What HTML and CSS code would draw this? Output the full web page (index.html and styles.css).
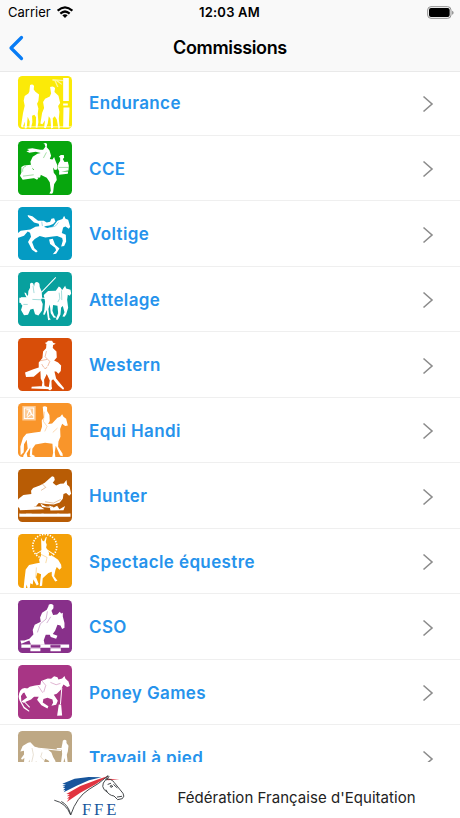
FILE: index.html
```html
<!DOCTYPE html>
<html lang="fr">
<head>
<meta charset="utf-8">
<title>Commissions</title>
<link rel="stylesheet" href="styles.css">
</head>
<body>
<div class="app">
<header class="header">
  <div class="status">
    <div class="carrier"><span>Carrier</span>
      <svg class="wifi" viewBox="0 0 48 36"><g fill="none" stroke="#000" stroke-width="6.5"><path d="M2 14Q24-6 46 14"/><path d="M10 23Q24 10 38 23"/></g><path d="M16 28Q24 22 32 28L24 36Z"/></svg>
    </div>
    <span class="time">12:03 AM</span>
    <svg class="battery" viewBox="0 0 81 39"><rect x="2" y="2" width="70" height="35" rx="10" fill="none" stroke="#929292" stroke-width="3"/><rect x="6" y="6" width="62" height="27" rx="6"/><path d="M75 14q5 2 5 6t-5 6z" fill="#999"/></svg>
  </div>
  <div class="nav">
    <svg class="back" viewBox="0 0 16 26"><path d="M13.5 2.5L3 13L13.5 23.5" fill="none" stroke="#087cf5" stroke-width="3.2" stroke-linecap="round" stroke-linejoin="round"/></svg>
    <h1 class="title">Commissions</h1>
  </div>
</header>
<main class="list">
  <div class="row"><svg class="icon yellow" viewBox="24 16 160 160">
    <path d="M60 43q8-4 12 3l-1 10 5 7 11 8-2 20-4 8 4 14-2 16 2 25-3 17-5-1 1-31-5-7-7 3 1 19-4 17-5-1 1-18-6-14-3 34-6 1 1-21-7 17-5-2 6-40 5-22-3-15 3-14 11-8 3-6zM120 49q9-5 15 3l-2 12 12 11 5 22-6 9 4 17-2 21 3 28-4 2-5-28-6-10-6 6 1 29-6 2-2-29-5-8-3 22-6 14-5-1 3-23-8 12-6-2 5-31 6-15-3-18 6-10 14-7 4-9z"/>
    <path d="M159 22h17v69h-17zM159 98h14v6h-14zM160 110h18l-2 60h-17zM35 167h148v2h-148z"/><path d="M127 25l32 3-1 4-14-2 12 10-2 2-17-12 8 19-4 0-8-18-6-1z" opacity=".6"/>
  </svg><span class="label">Endurance</span><svg class="chevron" viewBox="0 0 12 18"><path d="M1.5 1.5L10 9L1.5 16.5"/></svg></div>
  <div class="row"><svg class="icon green" viewBox="24 16 160 160">
    <path d="M99 24q7-5 12 1l-1 10 8 9 5 16-4 10 8 1 5-7 4 11 6 14-1 12-7 2-5-8 2 16 7 9 2 13-8 12-3 24-3 5-8-1 4-8-3-26-9-13-17-8-15-11-7 2-3 10 17 8-4 5-18-10 0-13 9-7-8-8-3-16 7-15 14-9 10-2-15-4-19 3-9-4 9-3-7-4 16-2 23 4 9 0 7-9-3-9z"/>
    <path d="M34 94l8-5 21-2 6 15 13 3 11 10-3 10-15 2-37 5-8-12 4-9zM145 83l5-7v-10l-4-3 6-5 9 0 1 8-4 4 5 9 10-1 3 12-1 14-27 4-6-11zM147 107h27l-1 7-26 3z"/>
    <path class="mark" d="M38 108q-2-14 10-17M39 121l32-4M109 50l-9 17M146 95h29"/>
  </svg><span class="label">CCE</span><svg class="chevron" viewBox="0 0 12 18"><path d="M1.5 1.5L10 9L1.5 16.5"/></svg></div>
  <div class="row"><svg class="icon blue" viewBox="24 16 160 160">
    <path d="M53 40l14 4 17 13 17 0 9 5 10-2 4-9 8-1 4 9-7 8-11 4-11 2-10 5-9-3-2-9-14-4-18-17zM61 83l15-8 17-2 19 6 17-5 13-17 15-5 5-10 4 9 8 3 6 21-4 6-10-7-7 3-4 17 12 5 1 20-6 14-9 1 5-17-2-8-15-6-13 1-22 3-17-4-15 9-8 9 7 18 10 9-5 4-12-8-12-23 9-16-3-12-7-4-11 13-17 6-14-3 13-3-16-2 14-5 10-8z"/>
    <path d="M128 111l7 18 13 11-10 16-10 1 10-12-3-7-15-11-3-14z"/><path class="mark" d="M95 60l2 13M121 77l15-4 9-11M78 115l18 2"/>
  </svg><span class="label">Voltige</span><svg class="chevron" viewBox="0 0 12 18"><path d="M1.5 1.5L10 9L1.5 16.5"/></svg></div>
  <div class="row"><svg class="icon teal" viewBox="24 16 160 160">
    <path d="M60 51q5-6 10 0l2 8 2-10q8-7 14 2l1 10 6 14 1 17-3 8 5 12-2 19-11 15-10-4-5-16-9 2-7 16-12 1-9-15 4-13-4-8-5-1v-15h22l-5-10-2-6 5 2 3 7h3l1-13 5-10z"/>
    <path d="M101 85l13-12 23-1 9-13 5 3 5 8 9-13 3 8 13 4 2 11-4 7-6-3-2 15 3 24-6 20-5 7-6-1 6-13-5-18-5 4-2 21-8 16-6-1 7-19-2-22-13-2-2 17 5 13 7 7-8 1-9-14-3-26-4 14 3 26 4 5-8 2-3-21-1-9-6 14-5-1 4-14 2-25z"/>
    <path class="line" d="M33 93h38M94 77l43-45M93 94l20 2M34 93v20"/><path class="mark" d="M69 58l3 21M40 113h13M67 98l26 1M147 78l2 17-6 11M154 71l1 29"/>
  </svg><span class="label">Attelage</span><svg class="chevron" viewBox="0 0 12 18"><path d="M1.5 1.5L10 9L1.5 16.5"/></svg></div>
  <div class="row"><svg class="icon rust" viewBox="24 16 160 160">
    <path d="M104 31l6-2 4-5 12 0 3 6 8 3-8 4-1 9 11 10 1 18-8 9 12 6 9 9-1 17-7 8-7-7-5 0 5 21 24 29-3 5-15-13-15-19-5 5 1 23-5 6-5-3 4-27-9-19-8 17 1 17 6 6-7 3-7-5 2-14-5-11-1-22-20 17-23 1-3-14 27-10 14-5 0-15 11-13 2-20 9-9 1-13z"/>
    <path d="M65 162q30-4 61 2l-1 5-61-2z"/><path class="mark" d="M109 55l-4 17 14 14-6 14M85 85l26-5M95 94q11 22 16 8"/>
  </svg><span class="label">Western</span><svg class="chevron" viewBox="0 0 12 18"><path d="M1.5 1.5L10 9L1.5 16.5"/></svg></div>
  <div class="row"><svg class="icon orange" viewBox="24 16 160 160">
    <path d="M98 27q8-4 13 2v11l7 12 1 18-5 9 12-2 16-17 8-3 6-7 4 7 8 6 5 20-8 2-9-7-6 16 1 23-6 14-1 16 13 20 1 8-8-2-8-18-5-11-3 19 2 16-10 1 3-15-2-27-22-3-29 5-9 13-1 17 10 5-8 4-9-4 2-26-11 18 3 14-8 2-6-8 14-23-3-26-8 13-1 24-9 9-1-26 8-26 10-12 25-4 17-2 5-16-1-18 6-9z"/>
    <path d="M37 25h40v43h-40z" opacity=".5"/><path class="badge-line" d="M43 31h28v31h-28zM49 36h11l4 12 8 9M51 54l7-17 6 13-13 9"/><path class="mark" d="M103 42l-3 29 11 15-7 15M128 104l14-13"/>
  </svg><span class="label">Equi Handi</span><svg class="chevron" viewBox="0 0 12 18"><path d="M1.5 1.5L10 9L1.5 16.5"/></svg></div>
  <div class="row"><svg class="icon brown" viewBox="24 16 160 160">
    <path d="M119 44l7-6 6 2 2 9-6 8 10 8 12-5 11-1 8-10 2 14 7 6 5 21-6 6-9-8-8 3-2 14-9 11-18 6-23-1-22-3-9 10-17 2-13-6-11 8-10 0-3-5-22 9-3-6 22-10 5-14 15-12 24-3-1-10 6-8 20-8 15-8z"/>
    <path d="M28 149h153v10h-153zM26 127l18-6 12-4 8 9 4-7 4 9 19 0 12 8-73 3zM118 125l13 6 10-5 7 10 17-9-5 12-39 1zM91 119l17 9 20 0-2 5-30-3z"/><path class="mark" d="M31 149h17M65 149h29M101 149h40M148 149h27M97 61l10 10-14 9M105 114l25 4 22-11"/>
  </svg><span class="label">Hunter</span><svg class="chevron" viewBox="0 0 12 18"><path d="M1.5 1.5L10 9L1.5 16.5"/></svg></div>
  <div class="row"><svg class="icon gold" viewBox="24 16 160 160">
    <circle class="wreath" cx="104" cy="53" r="36"/>
    <path d="M93 27l5 10 4 1 5-12 3-1-3 15 3 8-2 8 9 17-1 7 14 3 14 10 9 15 1 9-6 6-8-8-4 9-4 18 10 14-7 2-10-17 0-12-10 4-17 15-2 23-7 1 2-21 2-15-11-4-4 13 8 21-6 4-10-18-2 15-7-4-2 17-5 5-4-18-4 19-6 1 3-31 4-34 10-13 20-5 12-2-2-9 6-13-1-8 2-7z"/>
    <path class="line" d="M101 62l-24 14M105 60l25 16"/><path class="mark" d="M91 76l20 10-4 17M79 116l-2 31"/>
  </svg><span class="label">Spectacle équestre</span><svg class="chevron" viewBox="0 0 12 18"><path d="M1.5 1.5L10 9L1.5 16.5"/></svg></div>
  <div class="row"><svg class="icon purple" viewBox="24 16 160 160">
    <path d="M116 30q8-5 14 2v9l-6 7 5 13 12-2 8-8 4 5 5-2 0 11 5 20 0 14-7 4-5-11-9-2-7 18-7 10 14 5-4 9-16-5-3-7-12 0-6 16 3 14-41 0-5-13-8 3-16 7-3-10 12 0 15-5 12-13-2-13 6-16 18-9-2-13 6-14 14-9 5-10z"/>
    <path d="M34 149h143v10h-143zM61 160h30v9h-30zM121 160h31v9h-31z"/><path class="mark rail" d="M63 151h27v6h-27zM122 151h28v6h-28z"/><path class="mark" d="M112 50l-4 23-17 14-9 26M122 66l-12 19"/>
  </svg><span class="label">CSO</span><svg class="chevron" viewBox="0 0 12 18"><path d="M1.5 1.5L10 9L1.5 16.5"/></svg></div>
  <div class="row"><svg class="icon magenta" viewBox="24 213 160 160">
    <path d="M50 285l9-7 16-4 16-2 2-11 20-8 10 1 9-7 10 3 3 6 11-3 7-7 3 8 9 8 4 14-8 3-11-8-8 16-12 12-9 3 12 18-5 12-14 3 5-9-2-10-15-5-12 4-2 10 17 11-3 7-18-10-13-16 5-9-14 0-9 8-23 10-6-4 17-12-6-10-4-12z"/>
    <path d="M53 283q-16-5-22 6-9 16-2 31l12 22 16 11 1-3-15-12-9-16-1-16 6-9 11-3z"/>
    <path d="M146 331h7l3 33-15 1z"/><path class="line" d="M151 330l4-49M40 320l19 20"/><path class="mark" d="M84 275l14 21M96 261l11 13-6 20M121 265l17 7 13-4"/>
  </svg><span class="label">Poney Games</span><svg class="chevron" viewBox="0 0 12 18"><path d="M1.5 1.5L10 9L1.5 16.5"/></svg></div>
  <div class="row"><svg class="icon tan" viewBox="54 16 160 160">
    <path d="M68 61l16-10 7-1 12 12 18 7 22 2 11 9 5 14 7 12v15h-11l-10-17-10-5-6 22h-16l-5-15-5 15h-14l-1-20-5 20h-12l2-24-7 5-3-4 9-12 0-11-11 2zM188 45q6-5 11 0v7l6 8-2 17-3 10 4 35h-6l-5-25-6 25h-6l5-37-1-13-15-1v-4h14l3-15z"/><path class="line" d="M101 66l82 8"/><path class="mark" d="M96 67l4 20-5 22M126 80l-4 14 18 17"/>
  </svg><span class="label">Travail à pied</span><svg class="chevron" viewBox="0 0 12 18"><path d="M1.5 1.5L10 9L1.5 16.5"/></svg></div>
</main>
<footer class="footer">
  <svg class="logo" viewBox="162 147 216 126">
    <path fill="#17559c" d="M187 176l37-15 42-5 38 1-37 9-37 16-39 20 5-7-7 1 7-6-8-2 8-3-9-3 11-3z"/>
    <path fill="#e13440" d="M199 207l42-24 50-19 35-12-39 26-46 25-41 28 8-11-7 2 8-9-9 1 9-6zM320 161l38 2-35 3z"/>
    <g fill="none" stroke="#393c40" stroke-width="2.8" stroke-linecap="round" stroke-linejoin="round"><path d="M164 226q34 8 48 44Q230 216 267 193Q297 177 324 152L317 163Q335 160 343 173L369 205Q375 214 367 221L353 224L342 213Q325 211 318 195M317 164Q296 186 322 202M341 179l10 9M352 216l13-2M327 154l-7 11"/><path d="M185 230q19 9 27 38M324 178l8-3"/><circle cx="334" cy="184" r="3"/></g>
    <text class="logo-text" x="246" y="269" textLength="103">FFE</text>
  </svg>
  <span class="federation">Fédération Française d'Equitation</span>
</footer>
</div>
</body>
</html>
```
FILE: styles.css
```css
* { box-sizing: border-box; }
body { margin: 0; background: #fff; font-family: Inter, "Liberation Sans", sans-serif; }
.app { width: 460px; height: 818px; overflow: hidden; display: flex; flex-direction: column; }
.header { height: 72px; flex: none; background: #f9f9f9; border-bottom: 1px solid #e9e9e9; }
.status { height: 24px; display: grid; grid-template-columns: 1fr auto 1fr; align-items: center; padding: 0 6px 0 8px; font-size: 13px; }
.carrier { display: flex; align-items: center; gap: 6px; letter-spacing: 0; }
.wifi { width: 16px; height: 12px; }
.time { font-weight: 600; letter-spacing: .2px; margin-left: -3px; }
.battery { width: 27px; height: 13px; justify-self: end; }
.nav { height: 47px; display: grid; grid-template-columns: 24px 1fr 24px; align-items: center; padding: 0 8px; }
.back { width: 16px; height: 26px; }
.title { margin: 0; text-align: center; font-size: 18px; line-height: 24px; font-weight: 600; letter-spacing: -.35px; }
.list { height: 690px; flex: none; overflow: hidden; }
.row { height: 65.5px; padding: 0 26px 0 18px; display: flex; align-items: center; border-bottom: 1px solid #efefef; }
.row:first-child { margin-top: -2px; }
.icon { width: 53.5px; height: 53.5px; flex: none; border-radius: 4.5px; fill: #fff; }
.line { fill: none; stroke: #fff; stroke-width: 3; }
.mark { fill: none; stroke-width: 1.8; opacity: .6; }
.badge-line { fill: none; stroke: #fff; stroke-width: 3; }
.wreath { fill: none; stroke: #fff; stroke-width: 5; stroke-dasharray: 4 4; }
.yellow { background: #fbea08; }
.green { background: #07a60d; } .green .mark { stroke: #07a60d; }
.blue { background: #049bc3; } .blue .mark { stroke: #049bc3; }
.teal { background: #08a09e; } .teal .mark { stroke: #08a09e; }
.rust { background: #d84e09; } .rust .mark { stroke: #d84e09; }
.orange { background: #f9952a; } .orange .mark { stroke: #f9952a; }
.brown { background: #b85c05; } .brown .mark { stroke: #b85c05; }
.gold { background: #f4a008; } .gold .mark { stroke: #f4a008; }
.purple { background: #88308a; } .purple .mark { stroke: #88308a; } .purple .rail { fill: #88308a; opacity: 1; }
.magenta { background: #a83585; } .magenta .mark { stroke: #a83585; }
.tan { background: #bea884; } .tan .mark { stroke: #bea884; }
.label { flex: 1; margin: 2px 0 0 17.5px; color: #2693ec; font-size: 17px; font-weight: 600; letter-spacing: .38px; line-height: 24px; }
.chevron { width: 12px; height: 18px; margin-top: 3px; fill: none; stroke: #8c8c8c; stroke-width: 1.6; }
.footer { height: 56px; flex: none; display: flex; align-items: center; padding-left: 54px; background: #fff; }
.logo { width: 72px; height: 42px; margin-top: 10px; }
.logo-text { font: 50px "Liberation Serif", serif; fill: #17559c; }
.federation { margin: 15px 0 0 51.5px; font-size: 15px; letter-spacing: .04px; color: #222; white-space: nowrap; }
```
